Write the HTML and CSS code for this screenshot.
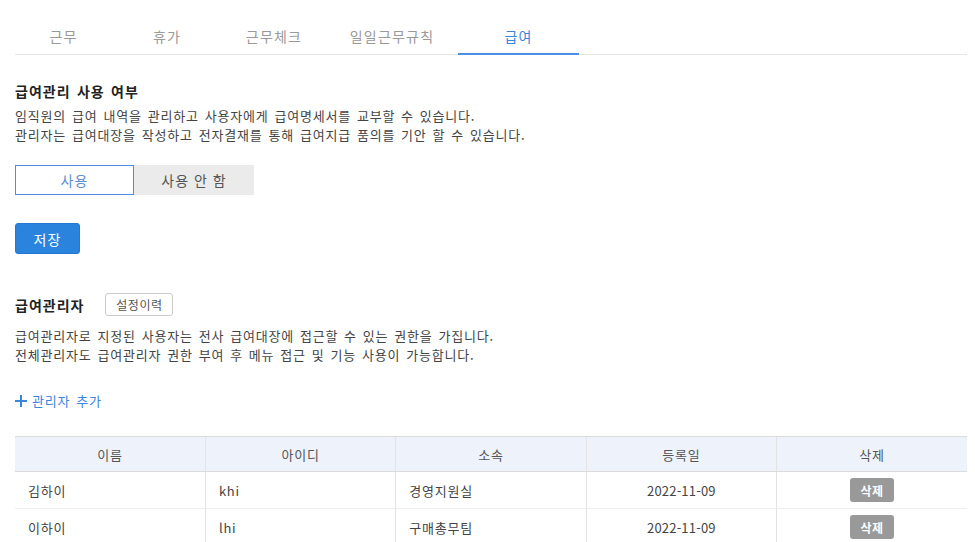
FILE: index.html
```html
<!DOCTYPE html>
<html lang="ko">

<head>
    <meta charset="UTF-8" />
    <meta name="viewport" content="width=device-width, initial-scale=1.0" />
    <title>급여 설정</title>
    <link rel="stylesheet" href="styles.css">
</head>

<body>
    <nav class="tabs">
        <a class="tab">근무</a>
        <a class="tab">휴가</a>
        <a class="tab">근무체크</a>
        <a class="tab">일일근무규칙</a>
        <a class="tab active">급여</a>
    </nav>

    <section class="use-section">
        <h2 class="title">급여관리 사용 여부</h2>
        <p class="desc">임직원의 급여 내역을 관리하고 사용자에게 급여명세서를 교부할 수 있습니다.<br>관리자는 급여대장을 작성하고 전자결재를 통해 급여지급 품의를 기안 할 수 있습니다.</p>

        <div class="toggle">
            <button class="toggle-btn on">사용</button>
            <button class="toggle-btn">사용 안 함</button>
        </div>

        <button class="save-btn">저장</button>
    </section>

    <section class="admin-section">
        <div class="admin-head">
            <h2 class="title">급여관리자</h2>
            <button class="history-btn">설정이력</button>
        </div>
        <p class="desc">급여관리자로 지정된 사용자는 전사 급여대장에 접근할 수 있는 권한을 가집니다.<br>전체관리자도 급여관리자 권한 부여 후 메뉴 접근 및 기능 사용이 가능합니다.</p>

        <a class="add-link">
            <svg width="12" height="12" viewBox="0 0 12 12"><path d="M6 0v12M0 6h12" stroke="#3b86dd" stroke-width="2"/></svg>
            관리자 추가
        </a>

        <table class="admin-table">
            <thead>
                <tr>
                    <th>이름</th>
                    <th>아이디</th>
                    <th>소속</th>
                    <th>등록일</th>
                    <th>삭제</th>
                </tr>
            </thead>
            <tbody>
                <tr>
                    <td>김하이</td>
                    <td>khi</td>
                    <td>경영지원실</td>
                    <td class="center date">2022-11-09</td>
                    <td class="center"><button class="del-btn">삭제</button></td>
                </tr>
                <tr>
                    <td>이하이</td>
                    <td>lhi</td>
                    <td>구매총무팀</td>
                    <td class="center date">2022-11-09</td>
                    <td class="center"><button class="del-btn">삭제</button></td>
                </tr>
            </tbody>
        </table>
    </section>
</body>

</html>
```

FILE: styles.css
```css
body {
    font-family: "Noto Sans CJK KR", "Noto Sans", sans-serif;
    margin: 0;
    padding: 19px 8px 0 15px;
    background: #fff;
    color: #333;
    font-size: 13px;
    letter-spacing: 0.8px;
    word-spacing: 1.5px;
}

.tabs {
    display: flex;
    border-bottom: 1px solid #e6e6e6;
    height: 35px;
}

.tab {
    height: 34px;
    line-height: 34px;
    text-align: center;
    font-size: 14px;
    letter-spacing: 1.2px;
    color: #999;
    border-bottom: 2px solid transparent;
    cursor: pointer;
}

.tab:nth-child(1) { width: 97px; }
.tab:nth-child(2) { width: 110px; }
.tab:nth-child(3) { width: 104px; }
.tab:nth-child(4) { width: 132px; }
.tab:nth-child(5) { width: 121px; }

.tab.active {
    color: #3b86dd;
    border-bottom-color: #4a90e2;
}

.title {
    margin: 0;
    font-size: 14px;
    font-weight: bold;
    line-height: 20px;
    letter-spacing: 1px;
    color: #222;
}

.desc {
    margin: 5px 0 0;
    line-height: 19px;
    color: #444;
}

.use-section {
    padding-top: 26px;
}

.toggle {
    display: flex;
    margin-top: 21px;
}

.toggle-btn {
    width: 120px;
    height: 30px;
    font-family: inherit;
    font-size: 14px;
    font-weight: normal;
    letter-spacing: 1px;
    word-spacing: 0;
    color: #555;
    background: #ebebeb;
    border: none;
    padding: 0;
}

.toggle-btn.on {
    width: 119px;
    background: #fff;
    color: #5b8fd6;
    border: 1px solid #4a90e2;
}

.save-btn {
    display: block;
    margin-top: 28px;
    width: 65px;
    height: 31px;
    font-family: inherit;
    font-size: 14px;
    letter-spacing: 1px;
    color: #fff;
    background: #2a83dc;
    border: 1px solid #2478cf;
    border-radius: 3px;
}

.admin-section {
    padding-top: 39px;
}

.admin-head {
    display: flex;
    align-items: center;
    gap: 21px;
}

.history-btn {
    width: 68px;
    height: 23px;
    padding: 0;
    font-family: inherit;
    font-size: 12px;
    letter-spacing: 0.5px;
    color: #555;
    background: #fff;
    border: 1px solid #ccc;
    border-radius: 3px;
}

.admin-section .desc {
    margin-top: 10px;
}

.add-link {
    display: flex;
    align-items: center;
    gap: 5px;
    margin-top: 27px;
    line-height: 20px;
    color: #3b86dd;
    cursor: pointer;
}

.admin-table {
    width: 100%;
    margin-top: 25px;
    border-collapse: collapse;
    table-layout: fixed;
}

.admin-table th {
    height: 34px;
    padding: 0;
    font-weight: normal;
    color: #555;
    background: #eef3fb;
    border-top: 1px solid #dcdcdc;
    border-bottom: 1px solid #dcdcdc;
    border-left: 1px solid #e3e3e3;
}

.admin-table td {
    height: 36px;
    padding: 0 13px;
    color: #444;
    border-bottom: 1px solid #eee;
    border-left: 1px solid #e3e3e3;
}

.admin-table th:first-child,
.admin-table td:first-child {
    border-left: none;
}

.admin-table td.center {
    text-align: center;
}

.admin-table td.date {
    letter-spacing: 0.2px;
}

.del-btn {
    width: 44px;
    height: 24px;
    padding: 0;
    font-family: inherit;
    font-size: 12px;
    font-weight: bold;
    letter-spacing: 0.5px;
    color: #fff;
    background: #999;
    border: none;
    border-radius: 3px;
}
```
